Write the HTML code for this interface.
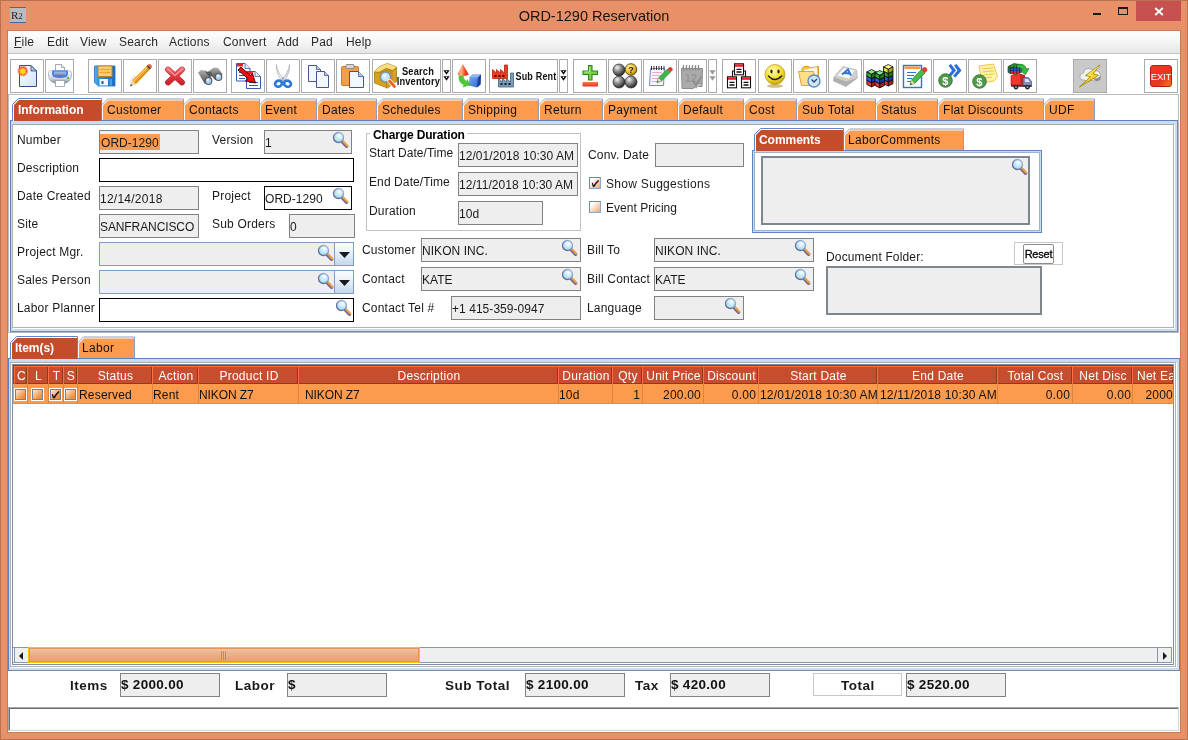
<!DOCTYPE html>
<html><head><meta charset="utf-8"><title>ORD-1290 Reservation</title>
<style>
*{box-sizing:border-box;margin:0;padding:0}
html,body{width:1188px;height:740px;overflow:hidden}
body{position:relative;background:#E89068;font-family:"Liberation Sans",sans-serif;font-size:12px;color:#1a1a1a;letter-spacing:.2px}
#win{position:absolute;left:0;top:0;width:1188px;height:740px;will-change:transform}
.a{position:absolute}
.t{position:absolute;white-space:nowrap;line-height:14px;height:14px}
.b{font-weight:bold}
.fld{position:absolute;background:#EEEEEE;border:1px solid #828282;white-space:nowrap;overflow:hidden;padding:5px 0 0 0;line-height:14px;letter-spacing:.05px}
.fw{background:#fff;border-color:#000}
.tb{position:absolute;top:59px;height:34px;background:#fff;border:1px solid #ABABAB}
.tb svg{position:absolute;left:50%;top:50%}
.tab{position:absolute}
.mag{position:absolute;width:17px;height:17px}
.cb{position:absolute;width:12px;height:12px;border:1px solid #6C8AB5;border-right-color:#8FA6C6;border-bottom-color:#8FA6C6;background:linear-gradient(135deg,#fff 20%,#FBD2B0 60%,#F4A468 100%)}
.th{position:absolute;top:366px;height:18px;background:#C64D2D;box-shadow:inset 1px 1px 0 #FF7040,inset -1px -1px 0 #8C3A20;color:#fff;text-align:center;line-height:19px;padding:1px 0 0 2px;white-space:nowrap;overflow:hidden;letter-spacing:.25px}
.td{position:absolute;top:385px;height:19px;line-height:21px;letter-spacing:.2px;white-space:nowrap;overflow:hidden;color:#111}
.vl{position:absolute;top:384px;height:19px;width:1px;background:#DD8540}
</style></head>
<body>
<div id="win">
<div class="a" style="left:0;top:0;width:1188px;height:740px;border:1px solid #BA7350"></div>
<div class="a" style="left:10px;top:7px;width:16px;height:16px;background:#B8BCC0;border-top:1px solid #3A6EA5;border-bottom:1px solid #3A6EA5"></div>
<div class="t" style="left:11px;top:8px;font-family:'Liberation Serif',serif;font-size:11px;color:#222;letter-spacing:0">R<span style="font-size:9px">2</span></div>
<div class="t" style="left:0;width:1188px;text-align:center;top:8px;font-size:14.5px;line-height:17px;height:17px;color:#1c1410;letter-spacing:0">ORD-1290 Reservation</div>
<div class="a" style="left:1093px;top:13px;width:8px;height:2px;background:#1a1a1a"></div>
<div class="a" style="left:1118px;top:7px;width:10px;height:8px;border:1px solid #1a1a1a;border-top-width:2px"></div>
<div class="a" style="left:1136px;top:1px;width:45px;height:20px;background:#C75050"></div>
<svg class="a" style="left:1154px;top:7px" width="10" height="9" viewBox="0 0 10 9"><path d="M1.200 1 L8.800 8 M8.800 1 L1.200 8" stroke="#fff" stroke-width="1.800" fill="none"/></svg>
<div class="a" style="left:7px;top:30px;width:1174px;height:703px;border:1px solid #CB7B53"></div>
<div class="a" style="left:8px;top:31px;width:1172px;height:701px;background:#fff"></div>
<div class="a" style="left:8px;top:31px;width:1172px;height:22px;background:linear-gradient(#fff 0%,#f6f6f6 45%,#e6e6e6 100%)"></div>
<div class="a" style="left:8px;top:53px;width:1172px;height:1px;background:#C4C4C4"></div>
<div class="t" style="left:14px;top:35px;font-size:12px;letter-spacing:.2px;color:#2a2a2a"><u>F</u>ile</div>
<div class="t" style="left:47px;top:35px;font-size:12px;letter-spacing:.2px;color:#2a2a2a">Edit</div>
<div class="t" style="left:80px;top:35px;font-size:12px;letter-spacing:.2px;color:#2a2a2a">View</div>
<div class="t" style="left:119px;top:35px;font-size:12px;letter-spacing:.2px;color:#2a2a2a">Search</div>
<div class="t" style="left:169px;top:35px;font-size:12px;letter-spacing:.2px;color:#2a2a2a">Actions</div>
<div class="t" style="left:223px;top:35px;font-size:12px;letter-spacing:.2px;color:#2a2a2a">Convert</div>
<div class="t" style="left:277px;top:35px;font-size:12px;letter-spacing:.2px;color:#2a2a2a">Add</div>
<div class="t" style="left:311px;top:35px;font-size:12px;letter-spacing:.2px;color:#2a2a2a">Pad</div>
<div class="t" style="left:346px;top:35px;font-size:12px;letter-spacing:.2px;color:#2a2a2a">Help</div>
<div class="a" style="left:8px;top:54px;width:1172px;height:41px;background:#fff"></div>
<div class="tb" style="left:10px;width:34px;background:#fff"><svg width="24" height="26" viewBox="0 0 24 26" style="margin-left:-12px;margin-top:-13px"><defs><linearGradient id="pg" x1="0" y1="0" x2="1" y2="1"><stop offset="0" stop-color="#FFFFFF"/><stop offset="1" stop-color="#CFE2F8"/></linearGradient><radialGradient id="st" cx=".5" cy=".5" r=".5"><stop offset="0" stop-color="#FFF03A"/><stop offset=".35" stop-color="#FFC21E"/><stop offset=".6" stop-color="#FF4A2A"/><stop offset="1" stop-color="#FF6A4A" stop-opacity="0"/></radialGradient></defs><path d="M4.500 2.500 h11.500 l5.500 5.500 v15.500 h-17 z" fill="url(#pg)" stroke="#3C4C86" stroke-width="1"/><path d="M16 2.500 v5.500 h5.500 z" fill="#9FC4EE" stroke="#3C4C86" stroke-width=".8"/><circle cx="7.800" cy="8" r="6" fill="url(#st)"/><path d="M7.800 4.500 l1 2.300 l2.500-.3 l-1.500 2 l1.500 2 l-2.500-.3 l-1 2.300 l-1-2.300 l-2.500 .3 l1.500-2 l-1.500-2 l2.500 .3z" fill="#FFD81E"/></svg></div>
<div class="tb" style="left:45px;width:29px;background:#fff"><svg width="24" height="26" viewBox="0 0 24 26" style="margin-left:-12px;margin-top:-13px"><defs><linearGradient id="pb" x1="0" y1="0" x2="0" y2="1"><stop offset="0" stop-color="#FAFBFC"/><stop offset=".6" stop-color="#D5D9DD"/><stop offset="1" stop-color="#7E858C"/></linearGradient></defs><path d="M7.500 1.500 h6 l3 3 v7 h-9 z" fill="#FCFCFC" stroke="#8E949B" stroke-width=".8"/><path d="M13.500 1.500 v3 h3" fill="#E4E6E8" stroke="#8E949B" stroke-width=".7"/><path d="M0.500 10 q0-2.500 3-2.500 h17 q3 0 3 2.500 v3.500 q-1 5.500 -7 7 h-9 q-6-1.500 -7-7z" fill="url(#pb)" stroke="#9AA0A8" stroke-width=".6"/><path d="M4.500 7.500 h15 q1.500 3 -1 6.500 q-6.500 2 -13 0 q-2.500-3.500 -1-6.500z" fill="#3F7FE6"/><path d="M6 8.500 h12 q.8 1.500 -.5 3.500 h-11 q-1.300-2 -.5-3.500z" fill="#8CB6F4"/><path d="M7 10.500 h10 v1.500 h-10z" fill="#8F8FA8"/><rect x="7.500" y="17.500" width="9" height="6" fill="#fff" stroke="#9AA0A8" stroke-width=".8"/><circle cx="20" cy="15" r="1.100" fill="#2FAE3A"/></svg></div>
<div class="tb" style="left:88px;width:34px;background:#fff"><svg width="24" height="24" viewBox="0 0 24 24" style="margin-left:-12px;margin-top:-12px"><defs><linearGradient id="fl" x1="0" y1="0" x2="1" y2="0"><stop offset="0" stop-color="#5BB4EE"/><stop offset=".2" stop-color="#2A92DC"/><stop offset="1" stop-color="#1B6FC4"/></linearGradient></defs><path d="M1.500 2 h20.500 v20 h-16.500 l-4-3.500z" fill="url(#fl)" stroke="#1C6EC0" stroke-width=".8"/><rect x="5" y="2" width="14" height="10.500" fill="#FBD07A" stroke="#B9842A"/><path d="M6.500 5.500h11M6.500 8.500h11" stroke="#F2A52A" stroke-width="1.600"/><rect x="6.500" y="15" width="8.500" height="6.500" fill="#F2F7FD"/><rect x="8.500" y="17" width="2" height="3" fill="#1C5CB0"/><rect x="16.500" y="15" width="2.500" height="6.500" fill="#5BB4EE" opacity=".7"/></svg></div>
<div class="tb" style="left:123px;width:34px;background:#fff"><svg width="26" height="26" viewBox="0 0 26 26" style="margin-left:-13px;margin-top:-13px"><path d="M2.500 23 q-2-5 5-11 l3 3z" fill="#D8D8D8" opacity=".55"/><path d="M3 23.500 l2.200-6 l3.800 3.800z" fill="#EBD3A8"/><path d="M3 23.500 l.9-2.500 l1.600 1.600z" fill="#444"/><path d="M5.200 17.500 L19.500 3.200 l3.300 3.300 L9 21.300z" fill="#F5A21A"/><path d="M6.300 18.600 L20.600 4.300" stroke="#FFD58A" stroke-width="1"/><path d="M8 20.300 L22.200 6" stroke="#C97A10" stroke-width="1"/><path d="M19.500 3.200 l1.200-1.200 l3.300 3.300 l-1.200 1.200z" fill="#3A3A3A"/><path d="M20.700 2 l.8-.7 q1-.5 2 .3 l1 1 q.8 1 .2 2 l-.7.700z" fill="#F0602A"/></svg></div>
<div class="tb" style="left:158px;width:34px;background:#fff"><svg width="24" height="24" viewBox="0 0 24 24" style="margin-left:-12px;margin-top:-12px"><defs><linearGradient id="dx" gradientUnits="userSpaceOnUse" x1="0" y1="3" x2="0" y2="21"><stop offset="0" stop-color="#F27A80"/><stop offset=".45" stop-color="#E23A44"/><stop offset="1" stop-color="#C8202C"/></linearGradient></defs><path d="M5 5.500 L19 18.500 M19 5.500 L5 18.500" stroke="#C0303A" stroke-width="5.800" stroke-linecap="round"/><path d="M5 5.500 L19 18.500 M19 5.500 L5 18.500" stroke="url(#dx)" stroke-width="4.800" stroke-linecap="round"/><path d="M4.800 5 L12 11.500 L19.200 5" stroke="#F8A8AC" stroke-width="1.300" fill="none" stroke-linecap="round" opacity=".8"/></svg></div>
<div class="tb" style="left:193px;width:34px;background:#fff"><svg width="28" height="20" viewBox="0 0 28 20" style="margin-left:-14px;margin-top:-10px"><defs><linearGradient id="bn" x1="0" y1="0" x2="0" y2="1"><stop offset="0" stop-color="#B0B0B0"/><stop offset=".5" stop-color="#7A7A7A"/><stop offset="1" stop-color="#4A4A4A"/></linearGradient></defs><path d="M12 5.500 l6-4 l4 .5 l4.500 6 l-2.500 5 l-5 1z" fill="url(#bn)"/><path d="M2 6.500 l3-2.500 l5 .5 l6 8 l-2.500 6 l-5-1 z" fill="url(#bn)"/><path d="M9 5.500 l6 .5 l2 4 l-4 1z" fill="#5A5A5A"/><ellipse cx="12.500" cy="15" rx="3.300" ry="3.500" fill="#A8CBF2" stroke="#565656" stroke-width="1.100"/><ellipse cx="22.500" cy="11" rx="3.300" ry="3.500" fill="#A8CBF2" stroke="#565656" stroke-width="1.100"/><ellipse cx="12" cy="14" rx="1.300" ry="1.500" fill="#E4F0FC"/><ellipse cx="22" cy="10" rx="1.300" ry="1.500" fill="#E4F0FC"/></svg></div>
<div class="tb" style="left:231px;width:34px;background:#fff"><svg width="28" height="28" viewBox="0 0 28 28" style="margin-left:-14px;margin-top:-14px"><path d="M2.500 1.500 h8.500 l5 5 v12.500 h-13.500z" fill="#fff" stroke="#3A5CB0"/><path d="M11 1.500 v5 h5" fill="#E8EEF8" stroke="#3A5CB0" stroke-width=".8"/><rect x="3" y="2" width="6" height="2.500" fill="#F0241E"/><path d="M5 10.500h8M5 13.500h8M5 16.500h6" stroke="#3A5CB0" stroke-width="1.200"/><path d="M12.500 9.500 h8.500 l5.500 5 v12 h-14z" fill="#fff" stroke="#3A5CB0"/><path d="M21 9.500 v5 h5" fill="#E8EEF8" stroke="#3A5CB0" stroke-width=".8"/><rect x="13" y="10" width="6" height="2.500" fill="#F0241E"/><path d="M15 20.500h9M15 23.500h9" stroke="#3A5CB0" stroke-width="1.200"/><path d="M4 8 L6.800 5 L16.500 13.500 L18.500 11.500 L21.500 21 L11.500 19 L13.700 16.500 Z" fill="#EE1010" stroke="#2A0505" stroke-width=".9" stroke-linejoin="round"/></svg></div>
<div class="tb" style="left:266px;width:34px;background:#fff"><svg width="22" height="26" viewBox="0 0 22 26" style="margin-left:-11px;margin-top:-13px"><path d="M4.500 1.500 Q5 9 12.500 17 L9.800 18 Q3.500 9 4.500 1.500z" fill="#F2F3F5" stroke="#A4A9B0" stroke-width=".7"/><path d="M17.500 1.500 Q17 9 9.500 17 L12.200 18 Q18.500 9 17.500 1.500z" fill="#E4E6EA" stroke="#A4A9B0" stroke-width=".7"/><circle cx="11" cy="15.500" r=".9" fill="#888"/><ellipse cx="6.500" cy="20.700" rx="3.500" ry="3" fill="none" stroke="#2E78D8" stroke-width="2.700" transform="rotate(-20 6.500 20.700)"/><ellipse cx="15.500" cy="20.700" rx="3.500" ry="3" fill="none" stroke="#2E78D8" stroke-width="2.700" transform="rotate(20 15.500 20.700)"/></svg></div>
<div class="tb" style="left:301px;width:34px;background:#fff"><svg width="24" height="26" viewBox="0 0 24 26" style="margin-left:-12px;margin-top:-13px"><path d="M2.5 2.5 h8 l4 4 v12 h-12 z" fill="#F2F7FE" stroke="#44568E" stroke-width="1"/><path d="M10.5 2.5 v4 h4" fill="#B4CDEE" stroke="#44568E" stroke-width=".8"/><path d="M10.5 8.5 h8 l4 4 v12 h-12 z" fill="#F2F7FE" stroke="#44568E" stroke-width="1"/><path d="M18.5 8.5 v4 h4" fill="#B4CDEE" stroke="#44568E" stroke-width=".8"/></svg></div>
<div class="tb" style="left:336px;width:34px;background:#fff"><svg width="26" height="26" viewBox="0 0 26 26" style="margin-left:-13px;margin-top:-13px"><rect x="1.500" y="3.5" width="17" height="19" rx="1.5" fill="#F0A04A" stroke="#C97A22"/><rect x="6" y="1.500" width="8" height="4" rx="1" fill="#D8D8D8" stroke="#8A8A8A"/><path d="M9.5 8.5 h9 l5 5 v11 h-14 z" fill="#F2F7FE" stroke="#44568E" stroke-width="1"/><path d="M18.5 8.5 v5 h5" fill="#B4CDEE" stroke="#44568E" stroke-width=".8"/></svg></div>
<div class="tb" style="left:372px;width:69px;background:#fff"><svg width="67" height="30" viewBox="0 0 67 30" style="margin-left:-33.5px;margin-top:-15px"><path d="M1.500 11 l5-5.500 l8-3 l9 3.500 v14.500 l-9 6.500 l-13-5z" fill="#D8A020" stroke="#A87808" stroke-width=".8"/><path d="M6.500 5.500 l8-3 l9 3.500 l-4 3 l-6-2 l-7 3.500 l-5 .500z" fill="#F6DC86"/><path d="M1.500 11 l5 .5 l7-4 l6 2.500 l4-3 M13.500 14 v13.500" stroke="#A87808" stroke-width=".7" fill="none"/><path d="M6.500 11.500 l7-3.500 l6 2 v9 l-6 4 l-7-3z" fill="#B8820C" opacity=".55"/><circle cx="12.500" cy="16" r="5" fill="#C4E6F8" stroke="#7A98B0" stroke-width="1.400"/><circle cx="11.500" cy="14.800" r="2" fill="#EAF6FD"/><path d="M16.500 20 L21.500 25.500" stroke="#fff" stroke-width="4.400" stroke-linecap="round"/><path d="M16.500 20 L21.500 25.500" stroke="#E8642A" stroke-width="2.800" stroke-linecap="round"/><text x="45" y="14" text-anchor="middle" font-family="Liberation Sans,sans-serif" font-weight="bold" font-size="10" textLength="32" lengthAdjust="spacingAndGlyphs" fill="#111">Search</text><text x="45.400" y="23.500" text-anchor="middle" font-family="Liberation Sans,sans-serif" font-weight="bold" font-size="10" textLength="43.500" lengthAdjust="spacingAndGlyphs" fill="#111">Inventory</text></svg></div>
<div class="tb" style="left:442px;width:9px;background:#fff"><svg width="7" height="12" viewBox="0 0 7 12" style="margin-left:-3.5px;margin-top:-6px"><path d="M0.300 0.300 h6.400 l-3.200 4.500z M0.300 6.200 h6.400 l-3.200 4.500z" fill="#111"/><circle cx="3.500" cy="1.500" r=".55" fill="#fff"/><circle cx="3.500" cy="7.400" r=".55" fill="#fff"/></svg></div>
<div class="tb" style="left:452px;width:34px;background:#fff"><svg width="26" height="26" viewBox="0 0 26 26" style="margin-left:-13px;margin-top:-13px"><defs><linearGradient id="cn" x1="0" y1="0" x2="1" y2="0"><stop offset="0" stop-color="#FF7A3A"/><stop offset=".35" stop-color="#FFB080"/><stop offset=".7" stop-color="#F0401E"/><stop offset="1" stop-color="#D82A10"/></linearGradient><linearGradient id="cb" x1="0" y1="0" x2="1" y2="1"><stop offset="0" stop-color="#7AAEF2"/><stop offset="1" stop-color="#2A62C8"/></linearGradient></defs><path d="M6.800 1 L12.800 11.500 q-5.500 3.500 -11.500 0z" fill="url(#cn)"/><path d="M13.500 14 l3-2.500 h8.500 l-.5 10 l-3.500 3 l-8-2z" fill="url(#cb)"/><path d="M13.500 14 l3-2.500 h8.500 l-3 3z" fill="#8CB8F4"/><path d="M22 14.500 l3-3 l-.5 10 l-3.500 3z" fill="#1A3E9A"/><path d="M3 12.500 q1.500 1 4 .5 q.5 4 4 5.500 l.5-2 l2.500 5.500 l-7 2 l1-2 q-6-2.500 -5-9.500z" fill="#4CC83A" stroke="#2A9A20" stroke-width=".4"/></svg></div>
<div class="tb" style="left:489px;width:69px;background:#fff"><svg width="67" height="28" viewBox="0 0 67 28" style="margin-left:-33.5px;margin-top:-14px"><path d="M2.500 16.500 v-9 l4 3.500 v-3.500 l4 3.500 v-3.500 l4 3.500 v-8 h3 v13.500z" fill="#F03A22" stroke="#B81E10" stroke-width=".8"/><path d="M4.500 14h2M8.500 14h2M12.500 14h2" stroke="#400" stroke-width="2"/><path d="M8.500 25 v-8.500 l4 3.500 v-3.500 l4 3.500 v-3.500 l4 3.500 v-9 h3 v14z" fill="#7A9AB8" stroke="#46627E" stroke-width=".8"/><path d="M10.500 22h2M14.500 22h2M18.500 22h2" stroke="#0E1A26" stroke-width="2"/><text x="46" y="17.800" text-anchor="middle" font-family="Liberation Sans,sans-serif" font-weight="bold" font-size="10" textLength="41" lengthAdjust="spacingAndGlyphs" fill="#111">Sub Rent</text></svg></div>
<div class="tb" style="left:559px;width:9px;background:#fff"><svg width="7" height="12" viewBox="0 0 7 12" style="margin-left:-3.5px;margin-top:-6px"><path d="M0.300 0.300 h6.400 l-3.200 4.500z M0.300 6.200 h6.400 l-3.200 4.500z" fill="#111"/><circle cx="3.500" cy="1.500" r=".55" fill="#fff"/><circle cx="3.500" cy="7.400" r=".55" fill="#fff"/></svg></div>
<div class="tb" style="left:573px;width:34px;background:#fff"><svg width="20" height="24" viewBox="0 0 20 24" style="margin-left:-10px;margin-top:-12px"><defs><linearGradient id="pm" x1="0" y1="0" x2="0" y2="1"><stop offset="0" stop-color="#FF7A4A"/><stop offset="1" stop-color="#E8301A"/></linearGradient></defs><path d="M8.500 1.500 h3.500 v5.500 h5.500 v3.500 h-5.500 v5.500 h-3.500 v-5.500 h-5.500 v-3.500 h5.500z" fill="#7AD04A" stroke="#2A8A1A" stroke-width="1.100"/><path d="M9.500 3 v5 h-5" stroke="#C8F0A8" stroke-width=".8" fill="none"/><rect x="2.500" y="18" width="15.500" height="4.500" fill="url(#pm)"/></svg></div>
<div class="tb" style="left:608px;width:34px;background:#fff"><svg width="26" height="26" viewBox="0 0 26 26" style="margin-left:-13px;margin-top:-13px"><defs><radialGradient id="gb" cx=".35" cy=".3" r=".8"><stop offset="0" stop-color="#F4F4F4"/><stop offset=".35" stop-color="#9A9A9A"/><stop offset=".8" stop-color="#3A3A3A"/><stop offset="1" stop-color="#161616"/></radialGradient><radialGradient id="yb" cx=".35" cy=".3" r=".8"><stop offset="0" stop-color="#FFF0A0"/><stop offset=".6" stop-color="#F2B81E"/><stop offset="1" stop-color="#8A6A10"/></radialGradient></defs><circle cx="7" cy="7" r="6" fill="url(#gb)" stroke="#222" stroke-width=".7"/><circle cx="7" cy="19" r="6" fill="url(#gb)" stroke="#222" stroke-width=".7"/><circle cx="19" cy="19" r="6" fill="url(#gb)" stroke="#222" stroke-width=".7"/><circle cx="19" cy="6.500" r="5.800" fill="url(#yb)" stroke="#3A2E08" stroke-width=".8"/><text x="19" y="10" text-anchor="middle" font-family="Liberation Sans,sans-serif" font-weight="bold" font-size="9" fill="#222">?</text></svg></div>
<div class="tb" style="left:643px;width:34px;background:#fff"><svg width="26" height="26" viewBox="0 0 26 26" style="margin-left:-13px;margin-top:-13px"><path d="M3.500 5.500 h14 l-1 17 h-14z" fill="#F2F5FF" stroke="#7C86C8"/><path d="M5 9.500h10M4.800 12.500h10M4.600 15.500h10M4.400 18.500h10" stroke="#E8A0A0" stroke-width=".8"/><path d="M4.500 3 v4M7 3v4M9.500 3v4M12 3v4M14.500 3v4M17 3v4" stroke="#333" stroke-width="1"/><path d="M10 19.500 l1.500-4.500 L20.500 6 l3 3 L14.500 18z" fill="#3FB84A" stroke="#1E7A2A" stroke-width=".7"/><path d="M20.500 6 l1.500-1.500 q1.500-1 3 .5 q1.500 1.500 0 3 l-1.500 1z" fill="#E53B2E"/><path d="M10 19.500 l1.500-4.500 l3 3z" fill="#F0D9B0"/><path d="M10 19.500 l.6-1.800 l1.200 1.200z" fill="#333"/></svg></div>
<div class="tb" style="left:678px;width:29px;background:#fff"><svg width="25" height="26" viewBox="0 0 25 26" style="margin-left:-12.5px;margin-top:-13px"><path d="M1.500 5.500 h21 l-.5 18 h-6 l-3 2 h-11z" fill="#ABABAB" stroke="#8C8C8C"/><path d="M16 25.500 l.5-5 h6" fill="#C4C4C4" stroke="#8C8C8C" stroke-width=".8"/><path d="M4 2 q-1.500 2 0 5.500M7 2 q-1.500 2 0 5.500M10 2 q-1.500 2 0 5.500M13 2 q-1.500 2 0 5.500M16 2 q-1.500 2 0 5.500M19 2 q-1.500 2 0 5.500" stroke="#8A8A8A" stroke-width="1.200" fill="none"/><text x="11" y="18.500" text-anchor="middle" font-family="Liberation Sans,sans-serif" font-size="11" font-weight="bold" fill="#969696">12</text><path d="M13 17.500 l3 5 l5.500-9" stroke="#8E8E8E" stroke-width="2" fill="none"/></svg></div>
<div class="tb" style="left:708px;width:9px;background:#fff"><svg width="7" height="12" viewBox="0 0 7 12" style="margin-left:-3.5px;margin-top:-6px"><path d="M0.300 0.300 h6.400 l-3.200 4.500z M0.300 6.200 h6.400 l-3.200 4.500z" fill="#9A9A9A"/></svg></div>
<div class="tb" style="left:722px;width:34px;background:#fff"><svg width="26" height="26" viewBox="0 0 26 26" style="margin-left:-13px;margin-top:-13px"><path d="M6.500 14 v-6 h13 v6" stroke="#111" stroke-width="1.100" fill="none"/><rect x="8.5" y="0.8" width="9" height="11" fill="#fff" stroke="#111" stroke-width="1.100"/><rect x="9" y="1.3" width="8" height="2.500" fill="#EE1C24"/><path d="M10.5 6.3h5M10.5 9h5" stroke="#111" stroke-width="1.300"/><rect x="1.5" y="13.8" width="9" height="11" fill="#fff" stroke="#111" stroke-width="1.100"/><rect x="2" y="14.3" width="8" height="2.500" fill="#EE1C24"/><path d="M3.5 19.3h5M3.5 22h5" stroke="#111" stroke-width="1.300"/><rect x="15.5" y="13.8" width="9" height="11" fill="#fff" stroke="#111" stroke-width="1.100"/><rect x="16" y="14.3" width="8" height="2.500" fill="#EE1C24"/><path d="M17.5 19.3h5M17.5 22h5" stroke="#111" stroke-width="1.300"/></svg></div>
<div class="tb" style="left:758px;width:34px;background:#fff"><svg width="24" height="26" viewBox="0 0 24 26" style="margin-left:-12px;margin-top:-13px"><defs><radialGradient id="sm" cx=".4" cy=".3" r=".8"><stop offset="0" stop-color="#FFFBB0"/><stop offset=".55" stop-color="#F5DC28"/><stop offset="1" stop-color="#B89010"/></radialGradient></defs><ellipse cx="12" cy="23" rx="8" ry="1.800" fill="#C9A050" opacity=".7"/><circle cx="12" cy="11.500" r="10" fill="url(#sm)" stroke="#A8860C" stroke-width=".6"/><ellipse cx="8.500" cy="8.500" rx="1.100" ry="2" fill="#222"/><ellipse cx="15.500" cy="8.500" rx="1.100" ry="2" fill="#222"/><path d="M5.500 13 q6.500 7 13 0" stroke="#222" stroke-width="1.500" fill="none" stroke-linecap="round"/></svg></div>
<div class="tb" style="left:793px;width:34px;background:#fff"><svg width="26" height="26" viewBox="0 0 26 26" style="margin-left:-13px;margin-top:-13px"><path d="M5 5.500 l2-2 h5 l1.500 1.500 l8-1.500 v16 h-16.500z" fill="#F5C445" stroke="#D89A1E"/><path d="M7 7 l13-3 v14 h-13z" fill="#FFF7DA"/><path d="M1.500 8.500 h15 l3 14 h-15z" fill="#FBE08A" stroke="#E0A82A"/><circle cx="17" cy="18" r="6" fill="#CFE6FA" stroke="#5C8AC0" stroke-width="1.400"/><path d="M14.500 16.500 L17 19 L20 16" stroke="#24457A" stroke-width="1.400" fill="none"/></svg></div>
<div class="tb" style="left:828px;width:34px;background:#fff"><svg width="28" height="24" viewBox="0 0 28 24" style="margin-left:-14px;margin-top:-12px"><path d="M3 13 L12 2.500 L25.500 6 L26.500 14 L15 22.500 L2.500 17z" fill="#CFCFCF" stroke="#A8A8A8" stroke-width=".6"/><path d="M6.500 11.500 L13 4 L23.500 6.500 L18 14.500z" fill="#FAFAFA"/><path d="M3 13 L15 17.500 L26.500 14 L15 22.500 L2.500 17z" fill="#B0B0B0"/><path d="M11 10.500 L17 5.500 L20 11.500 M13.500 9 L18.500 9.500" stroke="#2C6FD6" stroke-width="1.800" fill="none"/></svg></div>
<div class="tb" style="left:863px;width:34px;background:#fff"><svg width="28" height="26" viewBox="0 0 28 26" style="margin-left:-14px;margin-top:-13px"><path d="M17.5 16.5 l4.75 -2.4 l4.75 2.4 l-4.75 2.4 z" fill="#FF9A9A" stroke="#0A0A0A" stroke-width=".8" stroke-linejoin="round"/><path d="M17.5 16.5 l4.75 2.4 v4.2 l-4.75 -2.4 z" fill="#E03A3A" stroke="#0A0A0A" stroke-width=".8" stroke-linejoin="round"/><path d="M22.25 18.9 l4.75 -2.4 v4.2 l-4.75 2.4 z" fill="#A81E1E" stroke="#0A0A0A" stroke-width=".8" stroke-linejoin="round"/><path d="M17.5 12.3 l4.75 -2.4 l4.75 2.4 l-4.75 2.4 z" fill="#9AB0FF" stroke="#0A0A0A" stroke-width=".8" stroke-linejoin="round"/><path d="M17.5 12.3 l4.75 2.4 v4.2 l-4.75 -2.4 z" fill="#3A56E0" stroke="#0A0A0A" stroke-width=".8" stroke-linejoin="round"/><path d="M22.25 14.7 l4.75 -2.4 v4.2 l-4.75 2.4 z" fill="#2236A8" stroke="#0A0A0A" stroke-width=".8" stroke-linejoin="round"/><path d="M17.5 8.1 l4.75 -2.4 l4.75 2.4 l-4.75 2.4 z" fill="#8AE88A" stroke="#0A0A0A" stroke-width=".8" stroke-linejoin="round"/><path d="M17.5 8.1 l4.75 2.4 v4.2 l-4.75 -2.4 z" fill="#2EA82E" stroke="#0A0A0A" stroke-width=".8" stroke-linejoin="round"/><path d="M22.25 10.5 l4.75 -2.4 v4.2 l-4.75 2.4 z" fill="#1A7A1A" stroke="#0A0A0A" stroke-width=".8" stroke-linejoin="round"/><path d="M17.5 3.9 l4.75 -2.4 l4.75 2.4 l-4.75 2.4 z" fill="#FFFF8A" stroke="#0A0A0A" stroke-width=".8" stroke-linejoin="round"/><path d="M17.5 3.9 l4.75 2.4 v4.2 l-4.75 -2.4 z" fill="#E2E23A" stroke="#0A0A0A" stroke-width=".8" stroke-linejoin="round"/><path d="M22.25 6.3 l4.75 -2.4 v4.2 l-4.75 2.4 z" fill="#A8A81E" stroke="#0A0A0A" stroke-width=".8" stroke-linejoin="round"/><path d="M0.8 17.3 l4.75 -2.4 l4.75 2.4 l-4.75 2.4 z" fill="#FF9A9A" stroke="#0A0A0A" stroke-width=".8" stroke-linejoin="round"/><path d="M0.8 17.3 l4.75 2.4 v4.2 l-4.75 -2.4 z" fill="#E03A3A" stroke="#0A0A0A" stroke-width=".8" stroke-linejoin="round"/><path d="M5.55 19.7 l4.75 -2.4 v4.2 l-4.75 2.4 z" fill="#A81E1E" stroke="#0A0A0A" stroke-width=".8" stroke-linejoin="round"/><path d="M0.8 13.1 l4.75 -2.4 l4.75 2.4 l-4.75 2.4 z" fill="#9AB0FF" stroke="#0A0A0A" stroke-width=".8" stroke-linejoin="round"/><path d="M0.8 13.1 l4.75 2.4 v4.2 l-4.75 -2.4 z" fill="#3A56E0" stroke="#0A0A0A" stroke-width=".8" stroke-linejoin="round"/><path d="M5.55 15.5 l4.75 -2.4 v4.2 l-4.75 2.4 z" fill="#2236A8" stroke="#0A0A0A" stroke-width=".8" stroke-linejoin="round"/><path d="M0.8 8.9 l4.75 -2.4 l4.75 2.4 l-4.75 2.4 z" fill="#8AE88A" stroke="#0A0A0A" stroke-width=".8" stroke-linejoin="round"/><path d="M0.8 8.9 l4.75 2.4 v4.2 l-4.75 -2.4 z" fill="#2EA82E" stroke="#0A0A0A" stroke-width=".8" stroke-linejoin="round"/><path d="M5.55 11.3 l4.75 -2.4 v4.2 l-4.75 2.4 z" fill="#1A7A1A" stroke="#0A0A0A" stroke-width=".8" stroke-linejoin="round"/><path d="M9 18.3 l4.75 -2.4 l4.75 2.4 l-4.75 2.4 z" fill="#FF9A9A" stroke="#0A0A0A" stroke-width=".8" stroke-linejoin="round"/><path d="M9 18.3 l4.75 2.4 v4.2 l-4.75 -2.4 z" fill="#E03A3A" stroke="#0A0A0A" stroke-width=".8" stroke-linejoin="round"/><path d="M13.75 20.7 l4.75 -2.4 v4.2 l-4.75 2.4 z" fill="#A81E1E" stroke="#0A0A0A" stroke-width=".8" stroke-linejoin="round"/><path d="M9 14.1 l4.75 -2.4 l4.75 2.4 l-4.75 2.4 z" fill="#9AB0FF" stroke="#0A0A0A" stroke-width=".8" stroke-linejoin="round"/><path d="M9 14.1 l4.75 2.4 v4.2 l-4.75 -2.4 z" fill="#3A56E0" stroke="#0A0A0A" stroke-width=".8" stroke-linejoin="round"/><path d="M13.75 16.5 l4.75 -2.4 v4.2 l-4.75 2.4 z" fill="#2236A8" stroke="#0A0A0A" stroke-width=".8" stroke-linejoin="round"/><path d="M9 9.9 l4.75 -2.4 l4.75 2.4 l-4.75 2.4 z" fill="#8AE88A" stroke="#0A0A0A" stroke-width=".8" stroke-linejoin="round"/><path d="M9 9.9 l4.75 2.4 v4.2 l-4.75 -2.4 z" fill="#2EA82E" stroke="#0A0A0A" stroke-width=".8" stroke-linejoin="round"/><path d="M13.75 12.3 l4.75 -2.4 v4.2 l-4.75 2.4 z" fill="#1A7A1A" stroke="#0A0A0A" stroke-width=".8" stroke-linejoin="round"/></svg></div>
<div class="tb" style="left:898px;width:34px;background:#fff"><svg width="26" height="26" viewBox="0 0 26 26" style="margin-left:-13px;margin-top:-13px"><rect x="1.500" y="2.500" width="18" height="22" fill="#fff" stroke="#2E74D2" stroke-width="1.400"/><rect x="2.500" y="3.500" width="16" height="2.500" fill="#F59A3A"/><path d="M5 9.500h9M5 12.500h7M5 15.500h5M5 18.500h4" stroke="#2E74D2" stroke-width="1.200"/><path d="M8 22 l1.500-5 L19.500 6.500 l3.500 3.500 L12.500 20.500z" fill="#4CB848" stroke="#1E7A2A" stroke-width=".7"/><path d="M19.500 6.500 l2-2 q1.500-1 3 .5 q1.500 1.500 .5 3 l-2 2z" fill="#E53B2E"/><path d="M8 22 l1.500-5 l3 3.500z" fill="#F0D9B0"/><path d="M8 22 l.7-2.200 l1.500 1.500z" fill="#333"/></svg></div>
<div class="tb" style="left:933px;width:34px;background:#fff"><svg width="26" height="26" viewBox="0 0 26 26" style="margin-left:-13px;margin-top:-13px"><path d="M11.500 2.500 l2.500-1.500 l5 6.500 l-6 7 l-2.500-1.500 l4.500-5.500z" fill="#2C6FD6"/><path d="M17 2.500 l2.500-1.500 l5 6.500 l-6 7 l-2.500-1.500 l4.500-5.500z" fill="#2C6FD6"/><circle cx="8.5" cy="17.5" r="6.8" fill="#4E9A4A" stroke="#2E6A2A" stroke-width=".8"/><text x="8.5" y="21.5" text-anchor="middle" font-family="Liberation Sans,sans-serif" font-weight="bold" font-size="11" fill="#fff">$</text></svg></div>
<div class="tb" style="left:968px;width:34px;background:#fff"><svg width="28" height="26" viewBox="0 0 28 26" style="margin-left:-14px;margin-top:-13px"><path d="M8 3 l14.500-2 l4 12.500 l-3.500 4.500 l-12 2z" fill="#FFF3A8" stroke="#F0C02A" stroke-width=".9"/><path d="M11 6 l11-1.200M11.600 9 l11-1.200M12.200 12 l11-1.200M12.800 15 l8-1" stroke="#E8C84A" stroke-width="1"/><circle cx="8.5" cy="18.5" r="6.8" fill="#4E9A4A" stroke="#2E6A2A" stroke-width=".8"/><text x="8.5" y="22.5" text-anchor="middle" font-family="Liberation Sans,sans-serif" font-weight="bold" font-size="11" fill="#fff">$</text></svg></div>
<div class="tb" style="left:1003px;width:34px;background:#fff"><svg width="28" height="28" viewBox="0 0 28 28" style="margin-left:-14px;margin-top:-14px"><path d="M2 4.500 l6-3 l8 1.500 v7 l-7 2.500 l-7-2z" fill="#2E8A3A" stroke="#0E2A12" stroke-width=".6"/><path d="M2.500 6h13M2.500 8.500h13" stroke="#2438B0" stroke-width="1.600"/><path d="M3 10.800h11" stroke="#D8242A" stroke-width="1.600"/><path d="M4.500 4.500v7.500M7.500 3.500v9M10.500 3.500v9M13.500 3.500v8" stroke="#0E2A12" stroke-width=".6"/><path d="M11 2.500 q8-1.500 9.500 4.500 l2.500-.5 l-3.500 6 l-5.500-4 l2.500-.5 q-1-2.500-5.500-2.500z" fill="#2EBE3A" stroke="#146A1E" stroke-width=".6"/><path d="M5 13.500 l10-1.500 v11 l-10 0z" fill="#F0392C" stroke="#8A1A14" stroke-width=".6"/><path d="M15 12 l4 1 v10 h-4z" fill="#C4261C"/><path d="M17 15.500 h5.500 l3 4 v5 h-8.500z" fill="#8288C0" stroke="#3E4270" stroke-width=".6"/><path d="M19 17 h3 l2 3 h-5z" fill="#DCE4FA"/><rect x="5" y="23" width="20.500" height="1.800" fill="#3A3A3A"/><circle cx="10" cy="25.200" r="2.300" fill="#2A2A2A"/><circle cx="21.500" cy="25.200" r="2.300" fill="#2A2A2A"/><circle cx="10" cy="25.200" r=".9" fill="#AAA"/><circle cx="21.500" cy="25.200" r=".9" fill="#AAA"/></svg></div>
<div class="tb" style="left:1073px;width:34px;background:#C9C9C9"><svg width="28" height="26" viewBox="0 0 28 26" style="margin-left:-14px;margin-top:-13px"><path d="M8 17 q-4.500 0 -4-4 q.5-3 3.500-3 q.5-4.500 5.500-4.500 q3.500 0 5 2.500 q4.500-1 6 2.500 q1.500 4 -2 5.500 q-2 3 -6 1.500 q-4 1.500 -8-.5z" fill="#F0F0F0" stroke="#8E8E8E" stroke-width=".6"/><path d="M17 15 q4 1.500 7.500-2 q1 4 -2.500 5 q-3 1 -5-3z" fill="#8E8E8E"/><path d="M24 2 L9.500 12.500 L14.500 13.800 L3.500 24 L22.500 12.300 L17 10.800 z" fill="#FFD51E" stroke="#9A7A08" stroke-width=".8" stroke-linejoin="round"/><path d="M22 4 L12 11.800 L16 13" stroke="#FFF08A" stroke-width=".8" fill="none"/></svg></div>
<div class="tb" style="left:1144px;width:34px;background:#fff"><svg width="24" height="24" viewBox="0 0 24 24" style="margin-left:-12px;margin-top:-12px"><defs><linearGradient id="ex" x1="0" y1="0" x2="1" y2="1"><stop offset="0" stop-color="#F03A24"/><stop offset=".6" stop-color="#E8341E"/><stop offset="1" stop-color="#FF7A1A"/></linearGradient></defs><rect x="1.500" y="1.500" width="21" height="21" rx="2.500" fill="url(#ex)" stroke="#B81E10"/><text x="12" y="16" text-anchor="middle" font-family="Liberation Sans,sans-serif" font-size="9.500" fill="#fff" letter-spacing="-.2">EXIT</text></svg></div>
<div class="a" style="left:8px;top:94px;width:1171px;height:239px;border:1px solid #BDBDBD"></div>
<svg class="a" style="left:101px;top:98px" width="83" height="22" viewBox="0 0 83 22"><path d="M0.5 22 V7 L6.5 1 H82.5 V22" fill="#fff" stroke="#8E9FBC"/><path d="M2 22 V7.5 L7 2.5 H82 V22 z" fill="#FC9B4E"/></svg><div class="t" style="left:107px;top:102px;color:#111;letter-spacing:.3px;margin-top:1px">Customer</div>
<svg class="a" style="left:183px;top:98px" width="77" height="22" viewBox="0 0 77 22"><path d="M0.5 22 V7 L6.5 1 H76.5 V22" fill="#fff" stroke="#8E9FBC"/><path d="M2 22 V7.5 L7 2.5 H76 V22 z" fill="#FC9B4E"/></svg><div class="t" style="left:189px;top:102px;color:#111;letter-spacing:.3px;margin-top:1px">Contacts</div>
<svg class="a" style="left:259px;top:98px" width="58" height="22" viewBox="0 0 58 22"><path d="M0.5 22 V7 L6.5 1 H57.5 V22" fill="#fff" stroke="#8E9FBC"/><path d="M2 22 V7.5 L7 2.5 H57 V22 z" fill="#FC9B4E"/></svg><div class="t" style="left:265px;top:102px;color:#111;letter-spacing:.3px;margin-top:1px">Event</div>
<svg class="a" style="left:316px;top:98px" width="61" height="22" viewBox="0 0 61 22"><path d="M0.5 22 V7 L6.5 1 H60.5 V22" fill="#fff" stroke="#8E9FBC"/><path d="M2 22 V7.5 L7 2.5 H60 V22 z" fill="#FC9B4E"/></svg><div class="t" style="left:322px;top:102px;color:#111;letter-spacing:.3px;margin-top:1px">Dates</div>
<svg class="a" style="left:376px;top:98px" width="87" height="22" viewBox="0 0 87 22"><path d="M0.5 22 V7 L6.5 1 H86.5 V22" fill="#fff" stroke="#8E9FBC"/><path d="M2 22 V7.5 L7 2.5 H86 V22 z" fill="#FC9B4E"/></svg><div class="t" style="left:382px;top:102px;color:#111;letter-spacing:.3px;margin-top:1px">Schedules</div>
<svg class="a" style="left:462px;top:98px" width="77" height="22" viewBox="0 0 77 22"><path d="M0.5 22 V7 L6.5 1 H76.5 V22" fill="#fff" stroke="#8E9FBC"/><path d="M2 22 V7.5 L7 2.5 H76 V22 z" fill="#FC9B4E"/></svg><div class="t" style="left:468px;top:102px;color:#111;letter-spacing:.3px;margin-top:1px">Shipping</div>
<svg class="a" style="left:538px;top:98px" width="65" height="22" viewBox="0 0 65 22"><path d="M0.5 22 V7 L6.5 1 H64.5 V22" fill="#fff" stroke="#8E9FBC"/><path d="M2 22 V7.5 L7 2.5 H64 V22 z" fill="#FC9B4E"/></svg><div class="t" style="left:544px;top:102px;color:#111;letter-spacing:.3px;margin-top:1px">Return</div>
<svg class="a" style="left:602px;top:98px" width="76" height="22" viewBox="0 0 76 22"><path d="M0.5 22 V7 L6.5 1 H75.5 V22" fill="#fff" stroke="#8E9FBC"/><path d="M2 22 V7.5 L7 2.5 H75 V22 z" fill="#FC9B4E"/></svg><div class="t" style="left:608px;top:102px;color:#111;letter-spacing:.3px;margin-top:1px">Payment</div>
<svg class="a" style="left:677px;top:98px" width="67" height="22" viewBox="0 0 67 22"><path d="M0.5 22 V7 L6.5 1 H66.5 V22" fill="#fff" stroke="#8E9FBC"/><path d="M2 22 V7.5 L7 2.5 H66 V22 z" fill="#FC9B4E"/></svg><div class="t" style="left:683px;top:102px;color:#111;letter-spacing:.3px;margin-top:1px">Default</div>
<svg class="a" style="left:743px;top:98px" width="54" height="22" viewBox="0 0 54 22"><path d="M0.5 22 V7 L6.5 1 H53.5 V22" fill="#fff" stroke="#8E9FBC"/><path d="M2 22 V7.5 L7 2.5 H53 V22 z" fill="#FC9B4E"/></svg><div class="t" style="left:749px;top:102px;color:#111;letter-spacing:.3px;margin-top:1px">Cost</div>
<svg class="a" style="left:796px;top:98px" width="80" height="22" viewBox="0 0 80 22"><path d="M0.5 22 V7 L6.5 1 H79.5 V22" fill="#fff" stroke="#8E9FBC"/><path d="M2 22 V7.5 L7 2.5 H79 V22 z" fill="#FC9B4E"/></svg><div class="t" style="left:802px;top:102px;color:#111;letter-spacing:.3px;margin-top:1px">Sub Total</div>
<svg class="a" style="left:875px;top:98px" width="63" height="22" viewBox="0 0 63 22"><path d="M0.5 22 V7 L6.5 1 H62.5 V22" fill="#fff" stroke="#8E9FBC"/><path d="M2 22 V7.5 L7 2.5 H62 V22 z" fill="#FC9B4E"/></svg><div class="t" style="left:881px;top:102px;color:#111;letter-spacing:.3px;margin-top:1px">Status</div>
<svg class="a" style="left:937px;top:98px" width="107" height="22" viewBox="0 0 107 22"><path d="M0.5 22 V7 L6.5 1 H106.5 V22" fill="#fff" stroke="#8E9FBC"/><path d="M2 22 V7.5 L7 2.5 H106 V22 z" fill="#FC9B4E"/></svg><div class="t" style="left:943px;top:102px;color:#111;letter-spacing:.3px;margin-top:1px">Flat Discounts</div>
<svg class="a" style="left:1043px;top:98px" width="52" height="22" viewBox="0 0 52 22"><path d="M0.5 22 V7 L6.5 1 H51.5 V22" fill="#fff" stroke="#8E9FBC"/><path d="M2 22 V7.5 L7 2.5 H51 V22 z" fill="#FC9B4E"/></svg><div class="t" style="left:1049px;top:102px;color:#111;letter-spacing:.3px;margin-top:1px">UDF</div>
<div class="a" style="left:10px;top:120px;width:1168px;height:212px;border:1px solid;border-color:#5B7FC2 #7A8A9E #7A8A9E #5B7FC2;background:#C8DDF3;box-shadow:1px 1px 0 #B9B9B9;"></div><div class="a" style="left:12px;top:124px;width:1162px;height:204px;border:1px solid #B2B2B2;border-top-color:#A9ADA9;background:#fff;box-shadow:1px 1px 0 #fff"></div>
<svg class="a" style="left:12px;top:98px" width="90" height="23" viewBox="0 0 90 23"><path d="M0.5 23 V6.5 L6.5 0.5 H89.5 V23" fill="#fff" stroke="#5B86C9"/><path d="M2 23 V7 L7 2 H89 V23 z" fill="#C64B2B"/></svg><div class="t" style="left:18px;top:103px;color:#fff;font-weight:bold;letter-spacing:-.05px">Information</div>
<div class="t" style="left:17px;top:133px;">Number</div>
<div class="t" style="left:17px;top:161px;">Description</div>
<div class="t" style="left:17px;top:189px;">Date Created</div>
<div class="t" style="left:17px;top:217px;">Site</div>
<div class="t" style="left:17px;top:245px;">Project Mgr.</div>
<div class="t" style="left:17px;top:273px;">Sales Person</div>
<div class="t" style="left:17px;top:301px;">Labor Planner</div>
<div class="fld " style="left:99px;top:130px;width:100px;height:24px;"><span style="background:#FC9B4E;display:inline-block;height:16px;margin-top:-2px;padding:2px 1px 0 1px;line-height:14px">ORD-1290</span></div>
<div class="fld fw" style="left:99px;top:158px;width:255px;height:24px;"></div>
<div class="fld " style="left:99px;top:186px;width:100px;height:24px;letter-spacing:.25px">12/14/2018</div>
<div class="fld " style="left:99px;top:214px;width:100px;height:24px;letter-spacing:-.1px">SANFRANCISCO</div>
<div class="a" style="left:99px;top:242px;width:255px;height:24px;border:1px solid #7E9CC4;background:#EEEEEE"></div>
<div class="a" style="left:334px;top:242px;width:20px;height:24px;border:1px solid #7E9CC4;background:linear-gradient(#FDFEFF 0%,#E3EDF7 50%,#C3D8EC 100%)"></div>
<svg class="a" style="left:339px;top:252px" width="11" height="6" viewBox="0 0 11 6"><path d="M0 0h11l-5.500 6z" fill="#1a1a1a"/></svg>
<svg class="mag" style="left:317px;top:244px" viewBox="0 0 17 17"><defs><radialGradient id="mg1" cx=".6" cy=".3" r=".75"><stop offset="0" stop-color="#FFFFFF"/><stop offset=".45" stop-color="#C8ECFC"/><stop offset="1" stop-color="#9AD4F6"/></radialGradient><linearGradient id="mr1" x1="1" y1="0" x2="0" y2="1"><stop offset="0" stop-color="#A8C4E4"/><stop offset="1" stop-color="#55557E"/></linearGradient></defs><path d="M10.300 10.800 L14.600 15.300" stroke="#6A6896" stroke-width="3.400" stroke-linecap="round"/><path d="M11 10.400 L15.200 14.700" stroke="#F29A3A" stroke-width="2" stroke-linecap="round"/><circle cx="6.500" cy="6.500" r="5" fill="url(#mg1)" stroke="url(#mr1)" stroke-width="1.300"/></svg>
<div class="a" style="left:99px;top:270px;width:255px;height:24px;border:1px solid #7E9CC4;background:#EEEEEE"></div>
<div class="a" style="left:334px;top:270px;width:20px;height:24px;border:1px solid #7E9CC4;background:linear-gradient(#FDFEFF 0%,#E3EDF7 50%,#C3D8EC 100%)"></div>
<svg class="a" style="left:339px;top:280px" width="11" height="6" viewBox="0 0 11 6"><path d="M0 0h11l-5.500 6z" fill="#1a1a1a"/></svg>
<svg class="mag" style="left:317px;top:272px" viewBox="0 0 17 17"><defs><radialGradient id="mg2" cx=".6" cy=".3" r=".75"><stop offset="0" stop-color="#FFFFFF"/><stop offset=".45" stop-color="#C8ECFC"/><stop offset="1" stop-color="#9AD4F6"/></radialGradient><linearGradient id="mr2" x1="1" y1="0" x2="0" y2="1"><stop offset="0" stop-color="#A8C4E4"/><stop offset="1" stop-color="#55557E"/></linearGradient></defs><path d="M10.300 10.800 L14.600 15.300" stroke="#6A6896" stroke-width="3.400" stroke-linecap="round"/><path d="M11 10.400 L15.200 14.700" stroke="#F29A3A" stroke-width="2" stroke-linecap="round"/><circle cx="6.500" cy="6.500" r="5" fill="url(#mg2)" stroke="url(#mr2)" stroke-width="1.300"/></svg>
<div class="fld fw" style="left:99px;top:298px;width:255px;height:24px;"></div>
<svg class="mag" style="left:335px;top:299px" viewBox="0 0 17 17"><defs><radialGradient id="mg3" cx=".6" cy=".3" r=".75"><stop offset="0" stop-color="#FFFFFF"/><stop offset=".45" stop-color="#C8ECFC"/><stop offset="1" stop-color="#9AD4F6"/></radialGradient><linearGradient id="mr3" x1="1" y1="0" x2="0" y2="1"><stop offset="0" stop-color="#A8C4E4"/><stop offset="1" stop-color="#55557E"/></linearGradient></defs><path d="M10.300 10.800 L14.600 15.300" stroke="#6A6896" stroke-width="3.400" stroke-linecap="round"/><path d="M11 10.400 L15.200 14.700" stroke="#F29A3A" stroke-width="2" stroke-linecap="round"/><circle cx="6.500" cy="6.500" r="5" fill="url(#mg3)" stroke="url(#mr3)" stroke-width="1.300"/></svg>
<div class="t" style="left:212px;top:133px;">Version</div>
<div class="fld " style="left:264px;top:130px;width:88px;height:24px;">1</div>
<svg class="mag" style="left:332px;top:131px" viewBox="0 0 17 17"><defs><radialGradient id="mg4" cx=".6" cy=".3" r=".75"><stop offset="0" stop-color="#FFFFFF"/><stop offset=".45" stop-color="#C8ECFC"/><stop offset="1" stop-color="#9AD4F6"/></radialGradient><linearGradient id="mr4" x1="1" y1="0" x2="0" y2="1"><stop offset="0" stop-color="#A8C4E4"/><stop offset="1" stop-color="#55557E"/></linearGradient></defs><path d="M10.300 10.800 L14.600 15.300" stroke="#6A6896" stroke-width="3.400" stroke-linecap="round"/><path d="M11 10.400 L15.200 14.700" stroke="#F29A3A" stroke-width="2" stroke-linecap="round"/><circle cx="6.500" cy="6.500" r="5" fill="url(#mg4)" stroke="url(#mr4)" stroke-width="1.300"/></svg>
<div class="t" style="left:212px;top:189px;">Project</div>
<div class="fld fw" style="left:264px;top:186px;width:88px;height:24px;">ORD-1290</div>
<svg class="mag" style="left:332px;top:187px" viewBox="0 0 17 17"><defs><radialGradient id="mg5" cx=".6" cy=".3" r=".75"><stop offset="0" stop-color="#FFFFFF"/><stop offset=".45" stop-color="#C8ECFC"/><stop offset="1" stop-color="#9AD4F6"/></radialGradient><linearGradient id="mr5" x1="1" y1="0" x2="0" y2="1"><stop offset="0" stop-color="#A8C4E4"/><stop offset="1" stop-color="#55557E"/></linearGradient></defs><path d="M10.300 10.800 L14.600 15.300" stroke="#6A6896" stroke-width="3.400" stroke-linecap="round"/><path d="M11 10.400 L15.200 14.700" stroke="#F29A3A" stroke-width="2" stroke-linecap="round"/><circle cx="6.500" cy="6.500" r="5" fill="url(#mg5)" stroke="url(#mr5)" stroke-width="1.300"/></svg>
<div class="t" style="left:212px;top:217px;">Sub Orders</div>
<div class="fld " style="left:289px;top:214px;width:66px;height:24px;">0</div>
<div class="a" style="left:366px;top:133px;width:215px;height:98px;border:1px solid #C2C2C2"></div>
<div class="t b" style="left:370px;top:128px;background:#fff;padding:0 2px 0 3px;letter-spacing:-.15px;color:#000">Charge Duration</div>
<div class="t" style="left:369px;top:146px;letter-spacing:.05px">Start Date/Time</div>
<div class="fld " style="left:458px;top:143px;width:120px;height:24px;">12/01/2018 10:30 AM</div>
<div class="t" style="left:369px;top:175px;letter-spacing:.1px">End Date/Time</div>
<div class="fld " style="left:458px;top:172px;width:120px;height:24px;">12/11/2018 10:30 AM</div>
<div class="t" style="left:369px;top:204px;">Duration</div>
<div class="fld " style="left:458px;top:201px;width:85px;height:24px;">10d</div>
<div class="t" style="left:588px;top:148px;">Conv. Date</div>
<div class="fld " style="left:655px;top:143px;width:89px;height:24px;"></div>
<div class="cb" style="left:589px;top:177px"></div>
<svg class="a" style="left:591px;top:179px" width="8.500" height="8.500" viewBox="0 0 10 10"><path d="M1.500 4.500 L3 8.500 Q5 4.500 8.500 1.500 L8.800 2.500 Q5.500 5.500 3.800 9 L2.500 9 Z" fill="#111" stroke="#111" stroke-width=".9" stroke-linejoin="round"/></svg>
<div class="t" style="left:606px;top:177px;letter-spacing:.3px">Show Suggestions</div>
<div class="cb" style="left:589px;top:201px"></div>
<div class="t" style="left:606px;top:201px;letter-spacing:.02px">Event Pricing</div>
<div class="t" style="left:362px;top:243px;">Customer</div>
<div class="fld " style="left:421px;top:238px;width:160px;height:24px;">NIKON INC.</div>
<svg class="mag" style="left:561px;top:239px" viewBox="0 0 17 17"><defs><radialGradient id="mg6" cx=".6" cy=".3" r=".75"><stop offset="0" stop-color="#FFFFFF"/><stop offset=".45" stop-color="#C8ECFC"/><stop offset="1" stop-color="#9AD4F6"/></radialGradient><linearGradient id="mr6" x1="1" y1="0" x2="0" y2="1"><stop offset="0" stop-color="#A8C4E4"/><stop offset="1" stop-color="#55557E"/></linearGradient></defs><path d="M10.300 10.800 L14.600 15.300" stroke="#6A6896" stroke-width="3.400" stroke-linecap="round"/><path d="M11 10.400 L15.200 14.700" stroke="#F29A3A" stroke-width="2" stroke-linecap="round"/><circle cx="6.500" cy="6.500" r="5" fill="url(#mg6)" stroke="url(#mr6)" stroke-width="1.300"/></svg>
<div class="t" style="left:362px;top:272px;">Contact</div>
<div class="fld " style="left:421px;top:267px;width:160px;height:24px;">KATE</div>
<svg class="mag" style="left:561px;top:268px" viewBox="0 0 17 17"><defs><radialGradient id="mg7" cx=".6" cy=".3" r=".75"><stop offset="0" stop-color="#FFFFFF"/><stop offset=".45" stop-color="#C8ECFC"/><stop offset="1" stop-color="#9AD4F6"/></radialGradient><linearGradient id="mr7" x1="1" y1="0" x2="0" y2="1"><stop offset="0" stop-color="#A8C4E4"/><stop offset="1" stop-color="#55557E"/></linearGradient></defs><path d="M10.300 10.800 L14.600 15.300" stroke="#6A6896" stroke-width="3.400" stroke-linecap="round"/><path d="M11 10.400 L15.200 14.700" stroke="#F29A3A" stroke-width="2" stroke-linecap="round"/><circle cx="6.500" cy="6.500" r="5" fill="url(#mg7)" stroke="url(#mr7)" stroke-width="1.300"/></svg>
<div class="t" style="left:362px;top:301px;">Contact Tel #</div>
<div class="fld " style="left:451px;top:296px;width:130px;height:24px;">+1 415-359-0947</div>
<div class="t" style="left:587px;top:243px;">Bill To</div>
<div class="fld " style="left:654px;top:238px;width:160px;height:24px;">NIKON INC.</div>
<svg class="mag" style="left:794px;top:239px" viewBox="0 0 17 17"><defs><radialGradient id="mg8" cx=".6" cy=".3" r=".75"><stop offset="0" stop-color="#FFFFFF"/><stop offset=".45" stop-color="#C8ECFC"/><stop offset="1" stop-color="#9AD4F6"/></radialGradient><linearGradient id="mr8" x1="1" y1="0" x2="0" y2="1"><stop offset="0" stop-color="#A8C4E4"/><stop offset="1" stop-color="#55557E"/></linearGradient></defs><path d="M10.300 10.800 L14.600 15.300" stroke="#6A6896" stroke-width="3.400" stroke-linecap="round"/><path d="M11 10.400 L15.200 14.700" stroke="#F29A3A" stroke-width="2" stroke-linecap="round"/><circle cx="6.500" cy="6.500" r="5" fill="url(#mg8)" stroke="url(#mr8)" stroke-width="1.300"/></svg>
<div class="t" style="left:587px;top:272px;">Bill Contact</div>
<div class="fld " style="left:654px;top:267px;width:160px;height:24px;">KATE</div>
<svg class="mag" style="left:794px;top:268px" viewBox="0 0 17 17"><defs><radialGradient id="mg9" cx=".6" cy=".3" r=".75"><stop offset="0" stop-color="#FFFFFF"/><stop offset=".45" stop-color="#C8ECFC"/><stop offset="1" stop-color="#9AD4F6"/></radialGradient><linearGradient id="mr9" x1="1" y1="0" x2="0" y2="1"><stop offset="0" stop-color="#A8C4E4"/><stop offset="1" stop-color="#55557E"/></linearGradient></defs><path d="M10.300 10.800 L14.600 15.300" stroke="#6A6896" stroke-width="3.400" stroke-linecap="round"/><path d="M11 10.400 L15.200 14.700" stroke="#F29A3A" stroke-width="2" stroke-linecap="round"/><circle cx="6.500" cy="6.500" r="5" fill="url(#mg9)" stroke="url(#mr9)" stroke-width="1.300"/></svg>
<div class="t" style="left:587px;top:301px;">Language</div>
<div class="fld " style="left:654px;top:296px;width:90px;height:24px;"></div>
<svg class="mag" style="left:724px;top:297px" viewBox="0 0 17 17"><defs><radialGradient id="mg10" cx=".6" cy=".3" r=".75"><stop offset="0" stop-color="#FFFFFF"/><stop offset=".45" stop-color="#C8ECFC"/><stop offset="1" stop-color="#9AD4F6"/></radialGradient><linearGradient id="mr10" x1="1" y1="0" x2="0" y2="1"><stop offset="0" stop-color="#A8C4E4"/><stop offset="1" stop-color="#55557E"/></linearGradient></defs><path d="M10.300 10.800 L14.600 15.300" stroke="#6A6896" stroke-width="3.400" stroke-linecap="round"/><path d="M11 10.400 L15.200 14.700" stroke="#F29A3A" stroke-width="2" stroke-linecap="round"/><circle cx="6.500" cy="6.500" r="5" fill="url(#mg10)" stroke="url(#mr10)" stroke-width="1.300"/></svg>
<svg class="a" style="left:843px;top:128px" width="121" height="22" viewBox="0 0 121 22"><path d="M0.5 22 V7 L6.5 1 H120.5 V22" fill="#fff" stroke="#8E9FBC"/><path d="M2 22 V7.5 L7 2.5 H120 V22 z" fill="#FC9B4E"/></svg><div class="t" style="left:848px;top:132px;color:#111;letter-spacing:.3px;margin-top:1px">LaborComments</div>
<div class="a" style="left:752px;top:150px;width:290px;height:83px;border:1px solid #5B86C9;background:#C6DBF1"></div>
<div class="a" style="left:754px;top:152px;width:286px;height:79px;border:1px solid #9FB2CB;background:#fff"></div>
<svg class="a" style="left:754px;top:128px" width="90" height="23" viewBox="0 0 90 23"><path d="M0.5 23 V6.5 L6.5 0.5 H89.5 V23" fill="#fff" stroke="#5B86C9"/><path d="M2 23 V7 L7 2 H89 V23 z" fill="#C64B2B"/></svg><div class="t" style="left:759px;top:133px;color:#fff;font-weight:bold;letter-spacing:-.05px">Comments</div>
<div class="a" style="left:761px;top:156px;width:269px;height:69px;border:2px solid #80868E;background:#EEEEEE"></div>
<svg class="mag" style="left:1011px;top:158px" viewBox="0 0 17 17"><defs><radialGradient id="mg11" cx=".6" cy=".3" r=".75"><stop offset="0" stop-color="#FFFFFF"/><stop offset=".45" stop-color="#C8ECFC"/><stop offset="1" stop-color="#9AD4F6"/></radialGradient><linearGradient id="mr11" x1="1" y1="0" x2="0" y2="1"><stop offset="0" stop-color="#A8C4E4"/><stop offset="1" stop-color="#55557E"/></linearGradient></defs><path d="M10.300 10.800 L14.600 15.300" stroke="#6A6896" stroke-width="3.400" stroke-linecap="round"/><path d="M11 10.400 L15.200 14.700" stroke="#F29A3A" stroke-width="2" stroke-linecap="round"/><circle cx="6.500" cy="6.500" r="5" fill="url(#mg11)" stroke="url(#mr11)" stroke-width="1.300"/></svg>
<div class="t" style="left:826px;top:250px;letter-spacing:.15px">Document Folder:</div>
<div class="a" style="left:1014px;top:242px;width:49px;height:23px;border:1px solid #C8C8C8;background:#fff"></div>
<div class="a" style="left:1023px;top:244px;width:31px;height:20px;border:1px solid #8C8C8C;border-radius:2px;background:#fff;text-align:center;line-height:19px;font-size:11px;letter-spacing:-.2px;color:#000;-webkit-text-stroke:.3px #000">Reset</div>
<div class="a" style="left:826px;top:266px;width:216px;height:49px;border:2px solid #80868E;background:#EEEEEE"></div>
<svg class="a" style="left:77px;top:336px" width="58" height="22" viewBox="0 0 58 22"><path d="M0.5 22 V7 L6.5 1 H57.5 V22" fill="#fff" stroke="#8E9FBC"/><path d="M2 22 V7.5 L7 2.5 H57 V22 z" fill="#FC9B4E"/></svg><div class="t" style="left:82px;top:340px;color:#111;letter-spacing:.3px;margin-top:1px">Labor</div>
<div class="a" style="left:8px;top:358px;width:1172px;height:313px;border:1px solid;border-color:#5B7FC2 #7A8A9E #7A8A9E #5B7FC2;background:#C8DDF3;"></div><div class="a" style="left:10px;top:362px;width:1166px;height:305px;border:1px solid #B2B2B2;border-top-color:#A9ADA9;background:#fff;box-shadow:1px 1px 0 #fff"></div><div class="a" style="left:12px;top:364px;width:1162px;height:301px;border:1px solid #7B8EA6"></div>
<svg class="a" style="left:10px;top:336px" width="68" height="23" viewBox="0 0 68 23"><path d="M0.5 23 V6.5 L6.5 0.5 H67.5 V23" fill="#fff" stroke="#5B86C9"/><path d="M2 23 V7 L7 2 H67 V23 z" fill="#C64B2B"/></svg><div class="t" style="left:15px;top:341px;color:#fff;font-weight:bold;letter-spacing:-.05px">Item(s)</div>
<div class="a" style="left:13px;top:365px;width:1160px;height:19px;background:#8C3A20"></div>
<div class="th" style="left:14px;width:13px;">C</div>
<div class="th" style="left:27px;width:21px;">L</div>
<div class="th" style="left:48px;width:15px;">T</div>
<div class="th" style="left:63px;width:14px;">S</div>
<div class="th" style="left:77px;width:75px;">Status</div>
<div class="th" style="left:152px;width:46px;">Action</div>
<div class="th" style="left:198px;width:100px;">Product ID</div>
<div class="th" style="left:298px;width:260px;">Description</div>
<div class="th" style="left:558px;width:54px;">Duration</div>
<div class="th" style="left:612px;width:30px;">Qty</div>
<div class="th" style="left:642px;width:61px;">Unit Price</div>
<div class="th" style="left:703px;width:55px;">Discount</div>
<div class="th" style="left:758px;width:119px;">Start Date</div>
<div class="th" style="left:877px;width:120px;">End Date</div>
<div class="th" style="left:997px;width:75px;">Total Cost</div>
<div class="th" style="left:1072px;width:60px;">Net Disc</div>
<div class="th" style="left:1132px;width:41px;text-align:left;padding-left:5px;">Net Ea</div>
<div class="a" style="left:13px;top:384px;width:1160px;height:20px;background:#FC9B4E;border-bottom:1px solid #E88A40"></div>
<div class="vl" style="left:27px"></div>
<div class="vl" style="left:48px"></div>
<div class="vl" style="left:63px"></div>
<div class="vl" style="left:77px"></div>
<div class="vl" style="left:152px"></div>
<div class="vl" style="left:198px"></div>
<div class="vl" style="left:298px"></div>
<div class="vl" style="left:558px"></div>
<div class="vl" style="left:612px"></div>
<div class="vl" style="left:642px"></div>
<div class="vl" style="left:703px"></div>
<div class="vl" style="left:758px"></div>
<div class="vl" style="left:877px"></div>
<div class="vl" style="left:997px"></div>
<div class="vl" style="left:1072px"></div>
<div class="vl" style="left:1132px"></div>
<div class="a" style="left:14px;top:388px;width:13px;height:13px;border:1px solid #fff;background:#71819B;padding:1px"><div style="width:9px;height:9px;background:linear-gradient(135deg,#FFEEDD 0%,#FBBF8C 35%,#F49040 75%,#F08A38 100%)"></div></div>
<div class="a" style="left:31px;top:388px;width:13px;height:13px;border:1px solid #fff;background:#71819B;padding:1px"><div style="width:9px;height:9px;background:linear-gradient(135deg,#FFEEDD 0%,#FBBF8C 35%,#F49040 75%,#F08A38 100%)"></div></div>
<div class="a" style="left:49px;top:388px;width:13px;height:13px;border:1px solid #fff;background:#71819B;padding:1px"><div style="width:9px;height:9px;background:linear-gradient(135deg,#FFEEDD 0%,#FBBF8C 35%,#F49040 75%,#F08A38 100%)"></div></div>
<div class="a" style="left:64px;top:388px;width:13px;height:13px;border:1px solid #fff;background:#71819B;padding:1px"><div style="width:9px;height:9px;background:linear-gradient(135deg,#FFEEDD 0%,#FBBF8C 35%,#F49040 75%,#F08A38 100%)"></div></div>
<svg class="a" style="left:51px;top:390px" width="9" height="9" viewBox="0 0 10 10"><path d="M1.500 4.500 L3 8.500 Q5 4.500 8.500 1.500 L8.800 2.500 Q5.500 5.500 3.800 9 L2.500 9 Z" fill="#111" stroke="#111" stroke-width=".9" stroke-linejoin="round"/></svg>
<div class="td" style="left:79px;width:72px;text-align:left">Reserved</div>
<div class="td" style="left:153px;width:44px;text-align:left">Rent</div>
<div class="td" style="left:199px;width:98px;text-align:left"><span style="letter-spacing:-.1px">NIKON Z7</span></div>
<div class="td" style="left:305px;width:250px;text-align:left"><span style="letter-spacing:-.1px">NIKON Z7</span></div>
<div class="td" style="left:559px;width:52px;text-align:left">10d</div>
<div class="td" style="left:612px;width:28px;text-align:right">1</div>
<div class="td" style="left:642px;width:59px;text-align:right">200.00</div>
<div class="td" style="left:703px;width:53px;text-align:right">0.00</div>
<div class="td" style="left:760px;width:117px;text-align:left">12/01/2018 10:30 AM</div>
<div class="td" style="left:880px;width:117px;text-align:left">12/11/2018 10:30 AM</div>
<div class="td" style="left:997px;width:73px;text-align:right">0.00</div>
<div class="td" style="left:1072px;width:59px;text-align:right">0.00</div>
<div class="td" style="left:1132px;width:41px;text-align:right">2000</div>
<div class="a" style="left:13px;top:647px;width:1160px;height:16px;background:#EFEFEF;border-top:1px solid #8497B0;border-bottom:1px solid #8497B0"></div>
<div class="a" style="left:13px;top:648px;width:2px;height:14px;background:#fff"></div>
<div class="a" style="left:14px;top:648px;width:1px;height:14px;background:#8497B0"></div>
<svg class="a" style="left:19px;top:652px" width="4" height="8" viewBox="0 0 4 8"><path d="M4 0 v8 L0 4z" fill="#1a1a1a"/></svg>
<div class="a" style="left:1157px;top:648px;width:1px;height:14px;background:#8497B0"></div>
<div class="a" style="left:1171px;top:648px;width:1px;height:14px;background:#8497B0"></div><div class="a" style="left:1172px;top:647px;width:1px;height:16px;background:#fff"></div>
<svg class="a" style="left:1163px;top:652px" width="4" height="8" viewBox="0 0 4 8"><path d="M0 0 v8 L4 4z" fill="#1a1a1a"/></svg>
<div class="a" style="left:28px;top:647px;width:392px;height:16px;border:1px solid #FFC000;background:#E8935C;padding:1px"><div style="width:100%;height:100%;background:linear-gradient(#F1C2A0 0%,#ECAE84 50%,#E8A06E 100%)"></div></div>
<div class="a" style="left:221px;top:651px;width:1px;height:9px;background:#8E98AC"></div>
<div class="a" style="left:223px;top:651px;width:1px;height:9px;background:#8E98AC"></div>
<div class="a" style="left:225px;top:651px;width:1px;height:9px;background:#8E98AC"></div>
<div class="t" style="left:70px;top:678px;font-weight:bold;font-size:13.500px;letter-spacing:.5px;color:#1a1a1a;line-height:16px;height:16px">Items</div>
<div class="fld" style="left:120px;top:673px;width:100px;height:24px;padding-top:3px;line-height:16px;font-weight:bold;font-size:13.500px;letter-spacing:.3px;color:#111">$ 2000.00</div>
<div class="t" style="left:235px;top:678px;font-weight:bold;font-size:13.500px;letter-spacing:.5px;color:#1a1a1a;line-height:16px;height:16px">Labor</div>
<div class="fld" style="left:287px;top:673px;width:100px;height:24px;padding-top:3px;line-height:16px;font-weight:bold;font-size:13.500px;letter-spacing:.3px;color:#111">$</div>
<div class="t" style="left:445px;top:678px;font-weight:bold;font-size:13.500px;letter-spacing:.5px;color:#1a1a1a;line-height:16px;height:16px">Sub Total</div>
<div class="fld" style="left:525px;top:673px;width:100px;height:24px;padding-top:3px;line-height:16px;font-weight:bold;font-size:13.500px;letter-spacing:.3px;color:#111">$ 2100.00</div>
<div class="t" style="left:635px;top:678px;font-weight:bold;font-size:13.500px;letter-spacing:.5px;color:#1a1a1a;line-height:16px;height:16px">Tax</div>
<div class="fld" style="left:670px;top:673px;width:100px;height:24px;padding-top:3px;line-height:16px;font-weight:bold;font-size:13.500px;letter-spacing:.3px;color:#111">$ 420.00</div>
<div class="a" style="left:813px;top:673px;width:89px;height:23px;border:1px solid #C8C8C8;background:#fff"></div>
<div class="t" style="left:841px;top:678px;font-weight:bold;font-size:13.500px;letter-spacing:.5px;color:#1a1a1a;line-height:16px;height:16px">Total</div>
<div class="fld" style="left:906px;top:673px;width:100px;height:24px;padding-top:3px;line-height:16px;font-weight:bold;font-size:13.500px;letter-spacing:.3px;color:#111">$ 2520.00</div>
<div class="a" style="left:8px;top:707px;width:1171px;height:24px;border:1px solid;border-color:#A6A6A6 #D4D4D4 #D4D4D4 #A6A6A6;background:#fff"><div style="width:100%;height:100%;border-top:1px solid #6E6E6E;border-left:1px solid #6E6E6E"></div></div>
</div>
</body></html>
